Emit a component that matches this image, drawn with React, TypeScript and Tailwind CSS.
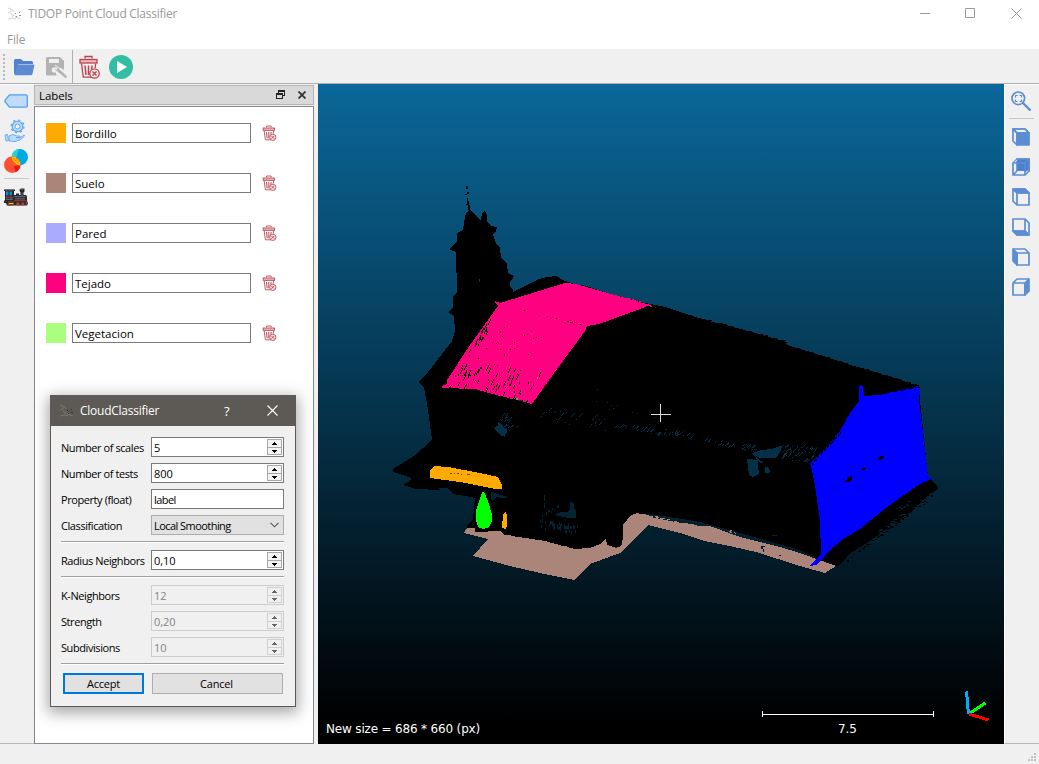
import React from 'react';

type Pt = [number, number];

function makeRandom(seed: number) {
  let s = seed;
  return () => {
    s = (s * 1664525 + 1013904223) % 4294967296;
    return s / 4294967296;
  };
}

/* Scatter of w x h specks inside the parallelogram o, o+u, o+v. */
function specks(seed: number, n: number, o: Pt, u: Pt, v: Pt, w = 1, h = 1) {
  const rnd = makeRandom(seed);
  let d = '';
  for (let i = 0; i < n; i++) {
    const a = rnd();
    const b = rnd();
    const x = Math.round(o[0] + a * u[0] + b * v[0]);
    const y = Math.round(o[1] + a * u[1] + b * v[1]);
    d += `M${x} ${y}h${w}v${h}h${-w}z`;
  }
  return d;
}

/* Short slanted dashes inside a parallelogram. */
function dashes(seed: number, n: number, o: Pt, u: Pt, v: Pt, step = 1) {
  const rnd = makeRandom(seed);
  let d = '';
  for (let i = 0; i < n; i++) {
    const a = rnd();
    const b = rnd();
    const l = 1 + Math.floor(rnd() * 3);
    const x = Math.round(o[0] + a * u[0] + b * v[0]);
    const y = Math.round(o[1] + a * u[1] + b * v[1]);
    for (let k = 0; k < l; k++) d += `M${x + k} ${y - k * step}h1v${step}h-1z`;
  }
  return d;
}

function Cloud() {
  return (
    <svg width="686" height="660" viewBox="318 84 686 660" shapeRendering="crispEdges" className="col-start-1 row-start-1 block">
      <path
        fill="#000"
        d="M470 210L474 213L477 217L481 220L482 213L485 211L487 215L487 222L491 226L497 227L496 231L493 234L496 243L500 248L501 257L507 264L508 273L514 276L513 279L510 281L510 286L513 290L513 292L525 286L539 279L547 277L556 276L565 281L575 284L587 286L604 292L630 300L650 304L665 307L680 312L705 320L730 326L752 332L780 340L790 346L820 355L850 365L880 374L900 380L919 386L920 400L928 477L937 485L938 489L925 498L913 511L896 522L870 541L849 554L845 560L838 566L825 562L800 550L740 533L700 522L651 514L631 516L625 530L620 545L600 549L574 549L519 538L500 534L467 532L467 526L473 519L475 498L465 496L453 494L447 488L438 488L440 490L415 489L403 485L411 480L411 478L393 472L393 469L414 456L432 440L428 410L424 387L418 382L425 376L452 341L455 332L454 316L448 312L453 308L453 296L457 292L456 252L449 249L457 241L457 233L463 230L464 222L466 213z"
      />
      <path fill="#000" d="M466 186h2v3h-2zM465 194h2v-2h2v2h-2v1h-2zM467 198h1v3h1v4h1v5h-2v-5h-2v-1h1z" />
      <path fill="#000" d={specks(4, 60, [560, 281], [92, 24], [0, 3], 3, 2) + specks(9, 100, [650, 304], [135, 37], [0, 2], 3, 1) + specks(10, 80, [790, 346], [127, 39], [0, 1], 3, 1)} />
      <path fill="#000" d={specks(14, 60, [845, 560], [92, -70], [2, 2], 2, 1)} />
      <path fill="#05405f" d="M479 279h1v3h-1z" />

      {/* ground */}
      <path
        fill="#ab8579"
        d="M467 528L475 528L475 532L500 531L504 535L519 537L545 541L574 549L590 548L600 544L606 539L607 545L616 548L622 545L623 525L631 515L637 513L651 517L670 521L700 526L710 526L740 537L780 547L800 553L836 566L825 573L800 566L756 552L730 546L704 541L680 533L648 525L620 553L590 564L574 580L540 573L510 566L473 556L488 539L464 533z"
      />
      <path fill="#000" d="M607 541l5 6 8 0 3 -8v-16z" />
      <path fill="#021c2c" d="M761 546h4v1h-2v2h1v3h-1v-3h-2zM779 555h2v1h-2z" />
      <path fill="#ab8579" d={specks(21, 20, [505, 534], [70, 14], [0, 1], 3, 1) + specks(22, 25, [640, 513], [60, 13], [0, 1], 3, 1) + specks(23, 8, [728, 528], [10, 3], [0, 4])} />

      {/* roof */}
      <path fill="#ff0080" d="M500 303L565 283L576 284L650 305L640 309L599 324L587 326L585 331L557 369L532 404L500 396L475 389L442 388L442 386L447 384L447 380L470 345L498 306L494 302L495 301z" />
      <path fill="#000" d={specks(31, 36, [494, 318], [55, 15], [-38, 58]) + dashes(32, 48, [472, 360], [72, 14], [-20, 28], 2) + dashes(33, 26, [488, 320], [5, 2], [-38, 60], 2)} />
      <path fill="#000" d={dashes(34, 55, [449, 387], [77, 14], [-1, 3])} />
      <path fill="#ff0080" d={specks(35, 35, [568, 282], [82, 22], [0, 2], 2, 1)} />
      <path fill="#000" d="M567 321h2v1h-2zM570 322h3v1h-3zM580 324h1v1h-1zM539 315h1v1h-1zM547 316h1v1h-1zM556 318h1v1h-1zM524 310h1v1h-1z" />
      <path fill="#66b52a" d="M537 377h1v2h-1zM516 398h2v2h-2z" />
      <path fill="#06304a" d="M530 389h1v1h-1zM531 387h1v2h-1zM533 384h1v2h-1zM518 400h4v1h-4z" />

      {/* gable wall */}
      <path
        fill="#0000ff"
        d="M859 386L861 385L863 387L864 396L880 395L900 390L918 386L920 390L919 400L925 450L928 477L934 478L920 484L904 495L887 507L860 529L843 539L829 551L822 560L816 565L810 566L821 554L820 520L815 485L812 471L810 463L825 449L840 431L850 413L859 401z"
      />
      <path fill="#000" d="M844 481l3-1v-2l5-2v3l-3 3h-4zM861 469l5-2v2l-3 2zM878 458l3-2 3 0v2l-4 2h-2zM884 484h1v1h-1z" />
      <path fill="#000" d={specks(41, 30, [866, 395], [52, -9], [0, 1], 2, 1) + specks(42, 28, [811, 463], [29, -32], [0, 1], 1, 2)} />
      <path fill="#03202f" d={specks(43, 26, [875, 532], [62, -45], [2, 3], 3, 1) + specks(44, 10, [895, 508], [14, -8], [2, 3], 2, 1)} />

      {/* gaps where the background shows through the walls */}
      <path
        fill="#06304a"
        d="M494 427l4-1v-4l4 2 2 4 3 0v4l-2 2v3l-5-2-3-3zM752 453l10-3 9-1 12-4-3 7-4 6-16 0-4-2 2 3 6 4h-4zM747 459l11 1v6l1 8-6 3-4-2zM765 467h3l2 4 -2 2h-3z"
      />
      <path fill="#06304a" d={dashes(51, 18, [500, 412], [16, 4], [0, 14]) + dashes(52, 18, [740, 443], [16, 3], [0, 6]) + dashes(58, 55, [784, 444], [32, 4], [-4, 15])} />
      <path fill="#06304a" d={dashes(53, 32, [539, 407], [82, 12], [0, 14]) + dashes(54, 26, [620, 424], [45, 8], [0, 4]) + dashes(59, 34, [664, 428], [72, 16], [0, 5]) + specks(60, 12, [595, 388], [60, 25], [0, 15])} />
      <path fill="#042333" d="M554 515l7-3 7 0 2-3v-7l4 1 0 5 2 3v7l-8 0-5-1-4-1zM491 492l5 1 1 4-5 4-1-4zM544 495h1v6h-1zM544 503h1v5h-1zM772 535h5v1h-5z" />
      <path fill="#042333" d={specks(55, 48, [540, 519], [37, 5], [0, 8], 1, 3) + specks(56, 14, [494, 494], [10, 1], [0, 3], 3, 1) + specks(57, 12, [541, 515], [17, -13], [2, 3], 1, 2)} />

      {/* kerbs and tree */}
      <path fill="#ffaa00" d="M430 470L434 466L448 467L480 473L498 477L502 485L502 489L495 489L460 482L430 478z" />
      <path fill="#5a4526" d="M450 473h2v1h-2zM454 473h1v1h-1zM457 473h2v1h-2zM461 474h1v1h-1zM467 474h3v1h-3z" />
      <path fill="#ffaa00" d="M503 514l3-2 1 3v11l-1 3-4-1z" />
      <path fill="#00ff00" d="M482 492l1-1 2 3 4 10 3 11v6l-3 6-5 2-5-1-3-7 0-10 4-12z" />

      {/* centre cross */}
      <path fill="#ddd" d="M651 414h20v1h-20zM660 404h1v18h-1z" />

      {/* scale bar */}
      <path fill="#fff" d="M762 714h172v1h-172zM762 711h1v6h-1zM933 711h1v6h-1z" />

      {/* axes */}
      <path stroke="#00aaff" strokeWidth="3" d="M966.500 691.500l2 22.500" />
      <path stroke="#00ff00" strokeWidth="3" d="M970 713l15.500 -10" />
      <path stroke="#ff0000" strokeWidth="3" d="M969 714l19.500 6" />
    </svg>
  );
}

function Trash({ w, h }: { w: number; h: number }) {
  return (
    <svg width={w} height={h} viewBox="0 0 21 24" fill="none" stroke="#b84452" strokeWidth="1.300">
      <path d="M6 3.500V1.500h7v2" />
      <rect x="1" y="4.500" width="17" height="3.500" fill="#f4b5b9" />
      <path d="M2.500 8.500L4.300 22.200H13M16.600 8.500L16.200 13" />
      <path d="M6 10.500l1 9.500M9.500 10.500V20M13 10.500l-.5 4" strokeWidth="1.500" />
      <circle cx="15.500" cy="18.500" r="4.700" fill="#f8e4e5" />
      <path d="M13.500 16.500l4 4m0-4l-4 4" strokeWidth="1.300" />
    </svg>
  );
}

function CloudLogo({ dark = false }: { dark?: boolean }) {
  return (
    <svg width="16" height="16" viewBox="0 0 16 16" fill="none">
      <path stroke={dark ? '#77736f' : '#d4d4d4'} strokeWidth="1" d="M1 2l3 1v3l-3 1M4 7l2 4M1 13l5-1 3 1M8 11l6 2M5 3l2 3" />
      <path stroke={dark ? '#8a8682' : '#bbb'} strokeDasharray="1 1" d="M6 9l5 3" />
      <path fill={dark ? '#33312f' : '#888'} d="M8 7h1v1H8zM12 6h1v1h-1zM12 9h2v1h-2zM9 10h1v1H9z" />
    </svg>
  );
}

function Toolbar() {
  return (
    <div className="flex h-[34px] shrink-0 border-b border-[#b0b0b0] bg-[#f0f0f0]">
      <div className="flex w-[73px] items-center border-r border-[#b0b0b0]">
        <svg width="6" height="32" viewBox="0 0 6 32" className="ml-[1px] mt-[3px]" shapeRendering="crispEdges">
          {[2, 6, 10, 14, 18, 22, 26].map((y) => (
            <rect key={y} x="2" y={y} width="2" height="2" fill="#b8b8b8" />
          ))}
        </svg>
        <svg width="21" height="17" viewBox="0 0 21 17" className="ml-[7px] mt-[1px]">
          <path fill="#5181cd" d="M0 1.500Q0 0 1.500 0H7l2 2h8.500Q19 2 19 3.500V5H6L3 6v9l-1 1.200Q0 16 0 14z" />
          <path fill="#5c8ad3" d="M4 5.500h15.500q1 0 .8 1L18.500 15q-.3 1.300-1.700 1.300H1.500Q.8 16 1 15L3 6.500q.3-1 1-1z" />
        </svg>
        <svg width="22" height="22" viewBox="0 0 22 22" className="ml-[11px] mt-[2px]">
          <path fill="#b2b2b2" d="M1.500 0H14l4 4v9l-4-2.500-4 2v5l2 1H1.500Q0 18.500 0 17V1.500Q0 0 1.500 0z" />
          <path fill="#f0f0f0" d="M3 2h10v4H3z" />
          <circle cx="8.500" cy="13" r="2.800" fill="#f0f0f0" />
          <path fill="#b2b2b2" stroke="#f0f0f0" strokeWidth=".8" d="M9 8.500q3 0 4 3l8.500 8-2 2-8.500-7q-3-1-3-3l2.500 1 1-1.500z" />
        </svg>
      </div>
      <div className="ml-[6px] flex items-center gap-[9px]">
        <div className="mt-[1px]"><Trash w={21} h={24} /></div>
        <svg width="24" height="24" viewBox="0 0 24 24" className="mt-[1px]">
          <circle cx="12" cy="12" r="12" fill="#33bda5" />
          <path fill="#fff" d="M8 6l10 6-10 6z" />
        </svg>
      </div>
    </div>
  );
}

function LeftBar() {
  return (
    <div className="flex w-[34px] shrink-0 flex-col border-b border-t border-b-[#b8b8b8] border-t-white bg-[#f0f0f0] pl-[4px]">
      <svg width="24" height="14" viewBox="0 0 24 14" className="mt-[9px] block">
        <path fill="#bfdcff" stroke="#4fa3e6" strokeWidth="1.300" d="M5.500.800H22q1.300 0 1.300 1.300v9.800q0 1.300-1.300 1.300H5.500L1 7.700V6.300z" />
      </svg>
      <svg width="24" height="24" viewBox="0 0 24 24" className="mt-[11px] block" fill="none" stroke="#62a9e8">
        <circle cx="13.500" cy="7.500" r="5.300" fill="#b9dcff" strokeWidth="1.100" />
        <circle cx="13.500" cy="7.500" r="6.400" strokeWidth="1.400" strokeDasharray="2.200 2.800" />
        <circle cx="13.500" cy="7.500" r="2.500" fill="#f0f0f0" />
        <path fill="#b9dcff" strokeWidth=".9" d="M1 16l2.500-.5 1 6-2.500.5zM5 17l4-1.500 4 1.500h3v1.500h-4l4 .5 4-3 .5 1-4.500 4-5 1.500-6-.5z" />
      </svg>
      <svg width="24" height="24" viewBox="0 0 24 24" className="mt-[6px] block">
        <circle cx="15.800" cy="8.200" r="8.200" fill="#00a9e5" />
        <path fill="#20d5d2" d="M15 0a8.200 8.200 0 0 0-7.300 8L12 9z" />
        <circle cx="8.200" cy="15.800" r="8.200" fill="#ff5030" />
        <path fill="#e71719" d="M16.500 15.800a8.200 8.200 0 0 1-5 7.500L10 17z" />
        <path fill="#ffbc00" d="M7.600 7.600a8.200 8.200 0 0 1 8.800 8.800A8.200 8.200 0 0 1 7.600 7.600z" />
        <path stroke="#ff7a00" d="M9 9l5 5M12 9l3 4M9 12l4 4" />
      </svg>
      <div className="mt-[5px] h-px w-[25px] bg-[#c9c9c9]" />
      <svg width="24" height="19" viewBox="0 0 24 19" className="mt-[9px] block">
        <path fill="#26272b" d="M0 1.500h11V3h-1v4h2V5.500h3V7h1.500V4L15.500 3V1.500l1.500-1h3.500v3L19.500 4.500V7H22l1 1.500v4l1 3-1 2H3L2 15H0v-2.500h1V3H0z" />
        <path fill="#62656c" d="M1 1.500h9V2.500H1zM16.500 1.300h3V2h-3zM17.500 4.500h1V8h-1zM10.500 8H21.500v1.200H10.500zM11 10.300h10v1.200H11z" />
        <path fill="#0d8fce" d="M2 3.500h2.500v4H2zM5.500 3.500H8v4H5.500z" />
        <path fill="#b23a38" d="M1.500 8.700H9.500V9.800h-8zM10 12.300h12.500v.9H10zM21.800 14h1.200v2.500h-1.200z" />
        <path fill="#9aa0a8" d="M2 10.800h7v.7H2z" />
        <path fill="none" stroke="#a3352f" strokeWidth=".9" d="M4.500 14h4.500v3.300H4.500zM12.500 14.800h2.500v2.200h-2.500zM17.500 14.800H20v2.200h-2.500z" />
        <path fill="#f3c21f" d="M5 15h4.500v1.200H5zM13.300 15.500h1.200v1h-1.200zM18.200 15.500h1.200v1h-1.200z" />
      </svg>
    </div>
  );
}

type CubeKind = 'front' | 'back' | 'top' | 'bottom' | 'left' | 'right';

function Cube({ kind }: { kind: CubeKind }) {
  const c = '#5c8dd3';
  const body = {
    front: (
      <>
        <path d="M1 1h12l4 4H5z" fill="#f0f0f0" />
        <path d="M5 5h12v12H5z" fill={c} />
        <path d="M1 1v12l4 4V5zM1 1h12l4 4H5z" />
      </>
    ),
    back: (
      <>
        <path d="M5 1h12v12H5z" fill="#4a80cf" />
        <path d="M2 14l3-1h7v3H3z" fill="#f0f0f0" stroke="none" />
        <path d="M2 6h2v6l-2 2z" fill="#f0f0f0" stroke="none" />
        <path d="M1 5h12v12H1zM1 5l4-4h12l-4 4M17 1v12l-4 4M1 17l4-4" />
        <path d="M3 3.800l2-2M14 14.500l2-2" stroke="#f0f0f0" strokeWidth="1" />
      </>
    ),
    top: (
      <>
        <path d="M1 1h12l4 4H5z" fill={c} />
        <path d="M5 5h12v12H5zM1 1v12l4 4V5zM1 1h12l4 4" />
      </>
    ),
    bottom: (
      <>
        <path d="M1 13h12l4 4H5z" fill={c} />
        <path d="M1 1h12v12H1zM13 1l4 4v12l-4-4M1 13l4 4h12" />
      </>
    ),
    left: (
      <>
        <path d="M1 1v12l4 4V5z" fill={c} />
        <path d="M5 5h12v12H5zM1 1h12l4 4" />
      </>
    ),
    right: (
      <>
        <path d="M13 5l4-4v12l-4 4z" fill={c} />
        <path d="M1 5h12v12H1zM1 5l4-4h12" />
      </>
    ),
  }[kind];
  return (
    <svg width="18" height="18" viewBox="0 0 18 18" fill="none" stroke={c} strokeWidth="1.700" strokeLinejoin="round" className="block">
      {body}
    </svg>
  );
}

function RightBar() {
  const kinds: CubeKind[] = ['front', 'back', 'top', 'bottom', 'left', 'right'];
  return (
    <div className="flex w-[35px] shrink-0 flex-col border-b border-l border-t border-b-[#b8b8b8] border-l-white border-t-white bg-[#f0f0f0]">
      <svg width="21" height="21" viewBox="0 0 21 21" fill="none" stroke="#5c8dd3" className="ml-[6px] mt-[6px] block">
        <circle cx="7.300" cy="7.300" r="6.300" strokeWidth="1.700" />
        <path strokeWidth="2.400" d="M12 12l7.500 7.500" />
        <path strokeWidth="1.100" d="M4.500 6.500V4.500h2M8.500 4.500h2v2M10.500 8.500v2h-2M6.500 10.500h-2v-2" />
      </svg>
      <div className="ml-[4px] mt-[6px] h-px w-[25px] bg-[#c9c9c9]" />
      <div className="ml-[7px] mt-[9px] flex flex-col gap-3">
        {kinds.map((k) => (
          <Cube key={k} kind={k} />
        ))}
      </div>
    </div>
  );
}

const LABELS = [
  { name: 'Bordillo', color: '#ffaa00' },
  { name: 'Suelo', color: '#ab8578' },
  { name: 'Pared', color: '#aaaaff' },
  { name: 'Tejado', color: '#ff0080' },
  { name: 'Vegetacion', color: '#aaff7f' },
];

function LabelsDock() {
  return (
    <div className="flex w-[280px] shrink-0 flex-col pt-[1px]">
      <div className="flex h-5 items-center border border-[#b5b5b5] bg-[#d9d9d9] pl-1 text-[11.500px] text-black">
        <span className="flex-1 pt-[2px] leading-none tracking-[-0.100px]">Labels</span>
        <svg width="9" height="9" viewBox="0 0 9 9" fill="none" stroke="#222" shapeRendering="crispEdges" className="-mt-[1px] mr-[13px]">
          <path d="M2.500 3V.5h6v5H6M0 3.500h6v5H.5v-5M2 1h7M0 4h6" />
        </svg>
        <svg width="8" height="8" viewBox="0 0 8 8" stroke="#333" strokeWidth="1.800" className="mr-[7px]">
          <path d="M.5.500l7 7m0-7l-7 7" />
        </svg>
      </div>
      <div className="mt-[1px] flex flex-1 flex-col gap-[30px] border border-[#828790] bg-white pl-[11px] pt-4">
        {LABELS.map((l) => (
          <div key={l.name} className="flex h-5 items-center">
            <div className="size-5" style={{ backgroundColor: l.color }} />
            <div className="ml-[6px] flex h-5 w-[179px] items-center border border-[#7a7a7a] pl-[2px] pt-[2px] text-[11.500px] leading-none text-black">{l.name}</div>
            <div className="ml-[11px]"><Trash w={15} h={16} /></div>
          </div>
        ))}
      </div>
    </div>
  );
}

function Spin({ disabled = false }: { disabled?: boolean }) {
  const line = disabled ? '#d0d0d0' : '#a8a8a8';
  const fill = disabled ? '#f0f0f0' : '#f3f3f3';
  const arrow = disabled ? '#666' : '#000';
  return (
    <svg width="15" height="17" viewBox="0 0 15 17" shapeRendering="crispEdges" className="mr-[1px] block">
      <path fill={fill} stroke={line} d="M.5.500h14v8H.5zM.5 8.500h14v7H.5z" />
      <path fill={arrow} d="M7 3h1v1h1v1h1v1H5V5h1V4h1zM5 11h5v1H9v1H8v1H7v-1H6v-1H5z" />
    </svg>
  );
}

interface FieldProps {
  label: string;
  value: string;
  kind?: 'spin' | 'text' | 'select';
  disabled?: boolean;
}

function Field({ label, value, kind = 'spin', disabled = false }: FieldProps) {
  const tone = disabled
    ? 'border-[#cccccc] bg-[#f0f0f0] text-[#838383]'
    : kind === 'select'
      ? 'border-[#adadad] bg-[#e1e1e1] text-black'
      : 'border-[#7a7a7a] bg-white text-black';
  return (
    <div className="flex h-5 items-center">
      <span className="w-[90px] whitespace-nowrap pt-[1px] leading-none tracking-[-0.420px]">{label}</span>
      <div className={'flex h-5 w-[133px] items-center justify-between border pl-[2px] leading-none ' + tone}>
        <span className={kind === 'spin' ? 'pt-[1px] tracking-[-0.100px]' : 'pt-[1px] tracking-[-0.550px]'}>{value}</span>
        {kind === 'spin' && <Spin disabled={disabled} />}
        {kind === 'select' && (
          <svg width="9" height="6" viewBox="0 0 9 6" fill="none" stroke="#555" strokeWidth="1.100" className="mr-1">
            <path d="M.5.800l4 4 4-4" />
          </svg>
        )}
      </div>
    </div>
  );
}

function Rule() {
  return <div className="h-[2px] w-[223px] border-t border-[#a0a0a0] bg-white" />;
}

function ClassifierDialog() {
  return (
    <div className="absolute left-[50px] top-[395px] flex h-[312px] w-[246px] flex-col border border-[#5d5955] bg-[#f0f0f0] text-[11px] text-black shadow-[0_4px_14px_2px_rgba(0,0,0,0.35)]">
      <div className="flex h-[30px] shrink-0 items-center bg-[#5d5955] pl-2 text-white">
        <CloudLogo dark />
        <span className="ml-[5px] w-[144px] text-[12px] leading-none tracking-[-0.250px]">CloudClassifier</span>
        <span className="w-[43px] text-[13px] leading-none">?</span>
        <svg width="11" height="11" viewBox="0 0 11 11" stroke="#fff" strokeWidth="1.100" className="-mt-[2px]">
          <path d="M.5.500l10 10m0-10l-10 10" />
        </svg>
      </div>
      <div className="flex flex-col pl-[10px] pt-[11px]">
        <div className="flex flex-col gap-[6px]">
          <Field label="Number of scales" value="5" />
          <Field label="Number of tests" value="800" />
          <Field label="Property (float)" value="label" kind="text" />
          <Field label="Classification" value="Local Smoothing" kind="select" />
        </div>
        <div className="mt-[6px]"><Rule /></div>
        <div className="mt-[7px]"><Field label="Radius Neighbors" value="0,10" /></div>
        <div className="mt-[6px]"><Rule /></div>
        <div className="mt-[7px] flex flex-col gap-[6px]">
          <Field label="K-Neighbors" value="12" disabled />
          <Field label="Strength" value="0,20" disabled />
          <Field label="Subdivisions" value="10" disabled />
        </div>
        <div className="mt-[6px]"><Rule /></div>
        <div className="ml-[2px] mt-[8px] flex gap-2">
          <button className="h-[21px] w-[81px] border-2 border-[#0078d7] bg-[#e1e1e1] leading-none tracking-[-0.200px]">Accept</button>
          <button className="h-[21px] w-[131px] border border-[#adadad] bg-[#e1e1e1] pr-[2px] leading-none tracking-[-0.200px]">Cancel</button>
        </div>
      </div>
    </div>
  );
}

export default function App() {
  return (
    <div className="relative flex h-[764px] w-[1039px] flex-col overflow-hidden bg-[#f0f0f0] font-['Open_Sans','Noto_Sans',sans-serif]">
      <div className="flex h-[27px] shrink-0 items-center bg-white pl-[7px] text-[12px] text-[#999]">
        <CloudLogo />
        <span className="ml-[5px] flex-1 pt-[1px] leading-none tracking-[-0.270px]">TIDOP Point Cloud Classifier</span>
        <svg width="102" height="11" viewBox="0 0 102 11" fill="none" stroke="#999" className="mr-[17px]">
          <path d="M0 5.500h10M45.500.500h9v9h-9zM91.500.500l10 10m0-10l-10 10" />
        </svg>
      </div>
      <div className="flex h-[23px] shrink-0 items-center border-b border-[#f0f0f0] bg-white pl-[7px] pt-[4px] text-[12px] leading-none tracking-[-0.200px] text-[#999]">File</div>
      <Toolbar />
      <div className="flex h-[660px] shrink-0">
        <LeftBar />
        <LabelsDock />
        <div className="w-[4px] shrink-0" />
        <div className="grid w-[686px] shrink-0 bg-[linear-gradient(to_bottom,#0a6799_0%,#000000_97%)] font-['DejaVu_Sans',sans-serif] text-[12px] leading-none text-white">
          <Cloud />
          <div className="col-start-1 row-start-1 flex items-end justify-between pb-[9px] pl-2 pr-[147px]">
            <span className="tracking-[-0.170px]">New size = 686 * 660 (px)</span>
            <span>7.5</span>
          </div>
        </div>
        <RightBar />
      </div>
      <div className="flex flex-1 items-end justify-end pb-[2px] pr-[2px]">
        <svg width="9" height="9" viewBox="0 0 9 9" fill="#bfbfbf" shapeRendering="crispEdges">
          <path d="M6 0h2v2H6zM3 3h2v2H3zM6 3h2v2H6zM0 6h2v2H0zM3 6h2v2H3zM6 6h2v2H6z" />
        </svg>
      </div>
      <ClassifierDialog />
    </div>
  );
}
